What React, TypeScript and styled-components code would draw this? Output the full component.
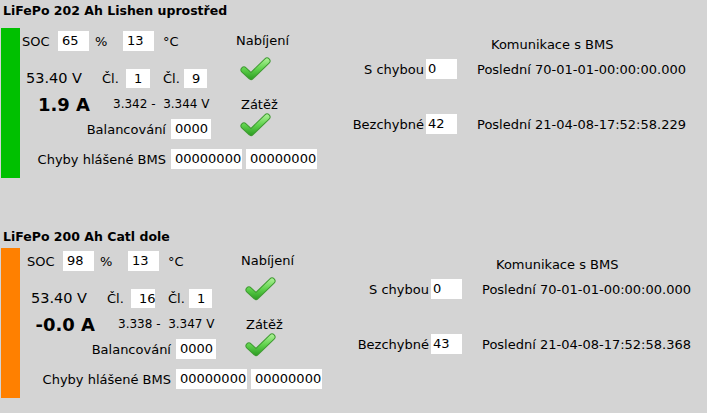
import React from 'react';
import styled, { createGlobalStyle } from 'styled-components';

const GlobalStyle = createGlobalStyle`
  html, body {
    margin: 0;
    padding: 0;
    background: #d4d4d4;
  }
  body {
    width: 707px;
    height: 413px;
    overflow: hidden;
    font-family: "DejaVu Sans", sans-serif;
    font-size: 13px;
    color: #000;
  }
`;

type Battery = {
    name: string;
    color: string;
    soc: string;
    temp: string;
    voltage: string;
    cellMin: string;
    cellMax: string;
    current: string;
    vMin: string;
    vMax: string;
    balance: string;
    err1: string;
    err2: string;
    errCount: string;
    errLast: string;
    okCount: string;
    okLast: string;
    shift: number;
    titleTop: number;
    titleGap: number;
};

const batteries: Battery[] = [
    {
        name: 'LiFePo 202 Ah Lishen uprostřed',
        color: '#00c000',
        soc: '65',
        temp: '13',
        voltage: '53.40 V',
        cellMin: '1',
        cellMax: '9',
        current: '1.9 A',
        vMin: '3.342',
        vMax: '3.344 V',
        balance: '0000',
        err1: '00000000',
        err2: '00000000',
        errCount: '0',
        errLast: '70-01-01-00:00:00.000',
        okCount: '42',
        okLast: '21-04-08-17:52:58.229',
        shift: 0,
        titleTop: 3,
        titleGap: 9,
    },
    {
        name: 'LiFePo 200 Ah Catl dole',
        color: '#ff8000',
        soc: '98',
        temp: '13',
        voltage: '53.40 V',
        cellMin: '16',
        cellMax: '1',
        current: '-0.0 A',
        vMin: '3.338',
        vMax: '3.347 V',
        balance: '0000',
        err1: '00000000',
        err2: '00000000',
        errCount: '0',
        errLast: '70-01-01-00:00:00.000',
        okCount: '43',
        okLast: '21-04-08-17:52:58.368',
        shift: 5,
        titleTop: 3,
        titleGap: 9,
    },
];

// glossy green tick
const Check = () => (
    <svg width="31" height="24" viewBox="0 0 31 24">
        <defs>
            <linearGradient id="chk" x1="0" y1="2" x2="0" y2="22" gradientUnits="userSpaceOnUse">
                <stop offset="0" stopColor="#a8ef92"/>
                <stop offset="0.5" stopColor="#5fd24c"/>
                <stop offset="1" stopColor="#2f9f25"/>
            </linearGradient>
        </defs>
        <polyline points="4,13 11,19.5 27,4" fill="none" stroke="#3f9a32"
                  strokeWidth="7" strokeLinecap="round" strokeLinejoin="round"/>
        <polyline points="4,13 11,19.5 27,4" fill="none" stroke="url(#chk)"
                  strokeWidth="5" strokeLinecap="round" strokeLinejoin="round"/>
    </svg>
);

export default function App() {
    return (
        <>
            <GlobalStyle/>
            <Page>
                {batteries.map((b, i) => (
                    <Panel key={b.name} $first={i === 0}>
                        <Title $gap={i === 0 ? 9 : 3}>{b.name}</Title>
                        <Body>
                            <Bar $color={b.color}/>
                            <Content $shift={b.shift}>
                                <Left>
                                    <Top>
                                        <Main>
                                            <Row $h={26}>
                                                <Label $w={38} $pl={2}>SOC</Label>
                                                <Box $w={31}>{b.soc}</Box>
                                                <Label $w={34} $pl={6}>%</Label>
                                                <Box $w={31}>{b.temp}</Box>
                                                <Label $pl={9}>°C</Label>
                                            </Row>
                                            <Row $h={28} $mt={10}>
                                                <Voltage>{b.voltage}</Voltage>
                                                <Label $w={24}>Čl.</Label>
                                                <Box $w={24} $h={19} $pl={8}>{b.cellMin}</Box>
                                                <Label $w={34} $pl={13}>Čl.</Label>
                                                <Box $w={23} $h={19} $pl={8}>{b.cellMax}</Box>
                                            </Row>
                                            <Row $h={24}>
                                                <Current>{b.current}</Current>
                                                <Range>{b.vMin} -  {b.vMax}</Range>
                                            </Row>
                                            <Row $h={26}>
                                                <Label $w={146} $right>Balancování</Label>
                                                <Box $w={40} $ml={5}>{b.balance}</Box>
                                            </Row>
                                        </Main>
                                        <Status>
                                            <StatusText $h={26} $pl={6}>Nabíjení</StatusText>
                                            <Icon $mt={3}><Check/></Icon>
                                            <StatusText $h={16} $mt={16} $pl={11}>Zátěž</StatusText>
                                            <Icon><Check/></Icon>
                                        </Status>
                                    </Top>
                                    <Row $h={20} $mt={7}>
                                        <Label $w={146} $right>Chyby hlášené BMS</Label>
                                        <Box $w={71} $ml={5}>{b.err1}</Box>
                                        <Box $w={71} $ml={4}>{b.err2}</Box>
                                    </Row>
                                </Left>
                                <Comm>
                                    <CommHead>Komunikace s BMS</CommHead>
                                    <CommRow $mt={5}>
                                        <CommLabel>S chybou</CommLabel>
                                        <Box $w={31} $ml={2} $pl={2}>{b.errCount}</Box>
                                        <Last>Poslední {b.errLast}</Last>
                                    </CommRow>
                                    <CommRow $mt={35}>
                                        <CommLabel>Bezchybné</CommLabel>
                                        <Box $w={31} $ml={2} $pl={2}>{b.okCount}</Box>
                                        <Last>Poslední {b.okLast}</Last>
                                    </CommRow>
                                </Comm>
                            </Content>
                        </Body>
                    </Panel>
                ))}
            </Page>
        </>
    );
}

const Page = styled.main`
  display: flex;
  flex-direction: column;
`

const Panel = styled.section<{ $first: boolean }>`
  display: flex;
  flex-direction: column;
  padding-top: ${p => p.$first ? 3 : 51}px;
`

const Title = styled.h2<{ $gap: number }>`
  margin: 0 0 ${p => p.$gap}px;
  padding-left: 3px;
  font-size: 12.5px;
  font-weight: bold;
  line-height: 16px;
`

const Body = styled.div`
  display: flex;
  height: 150px;
`

const Bar = styled.div<{ $color: string }>`
  width: 19px;
  margin-left: 1px;
  background: ${p => p.$color};
`

const Content = styled.div<{ $shift: number }>`
  display: flex;
  margin-left: ${p => p.$shift}px;
`

const Left = styled.div`
  width: 310px;
  display: flex;
  flex-direction: column;
`

const Top = styled.div`
  display: flex;
`

const Main = styled.div`
  width: 210px;
  display: flex;
  flex-direction: column;
`

const Row = styled.div<{ $h: number; $mt?: number }>`
  display: flex;
  align-items: center;
  height: ${p => p.$h}px;
  margin-top: ${p => p.$mt || 0}px;
  white-space: pre;
`

const Label = styled.span<{ $w?: number; $pl?: number; $right?: boolean }>`
  ${p => p.$w ? `width: ${p.$w}px; flex: none;` : ''}
  box-sizing: border-box;
  padding-left: ${p => p.$pl || 0}px;
  text-align: ${p => p.$right ? 'right' : 'left'};
`

const Box = styled.span<{ $w: number; $h?: number; $ml?: number; $pl?: number }>`
  flex: none;
  box-sizing: border-box;
  width: ${p => p.$w}px;
  height: ${p => p.$h || 20}px;
  margin-left: ${p => p.$ml || 0}px;
  padding-left: ${p => p.$pl ?? 4}px;
  background: #fff;
  line-height: ${p => p.$h || 20}px;
`

const Voltage = styled.span`
  width: 82px;
  flex: none;
  box-sizing: border-box;
  padding-left: 6px;
  font-size: 14.5px;
`

const Current = styled.span`
  width: 70px;
  flex: none;
  text-align: right;
  font-size: 18px;
  font-weight: bold;
`

const Range = styled.span`
  margin-left: 23px;
  font-size: 12px;
`

const Status = styled.div`
  display: flex;
  flex-direction: column;
  width: 80px;
`

const StatusText = styled.div<{ $h: number; $mt?: number; $pl: number }>`
  height: ${p => p.$h}px;
  line-height: ${p => p.$h}px;
  margin-top: ${p => p.$mt || 0}px;
  padding-left: ${p => p.$pl}px;
`

const Icon = styled.div<{ $mt?: number }>`
  display: flex;
  height: 24px;
  margin-top: ${p => p.$mt || 0}px;
  padding-left: 10px;
`

const Comm = styled.div`
  display: flex;
  flex-direction: column;
  width: 370px;
`

const CommHead = styled.div`
  margin-top: 8px;
  margin-left: 161px;
  line-height: 18px;
`

const CommRow = styled.div<{ $mt: number }>`
  display: flex;
  align-items: center;
  height: 20px;
  margin-top: ${p => p.$mt}px;
  white-space: nowrap;
`

const CommLabel = styled.span`
  width: 94px;
  flex: none;
  text-align: right;
`

const Last = styled.span`
  margin-left: 20px;
`
